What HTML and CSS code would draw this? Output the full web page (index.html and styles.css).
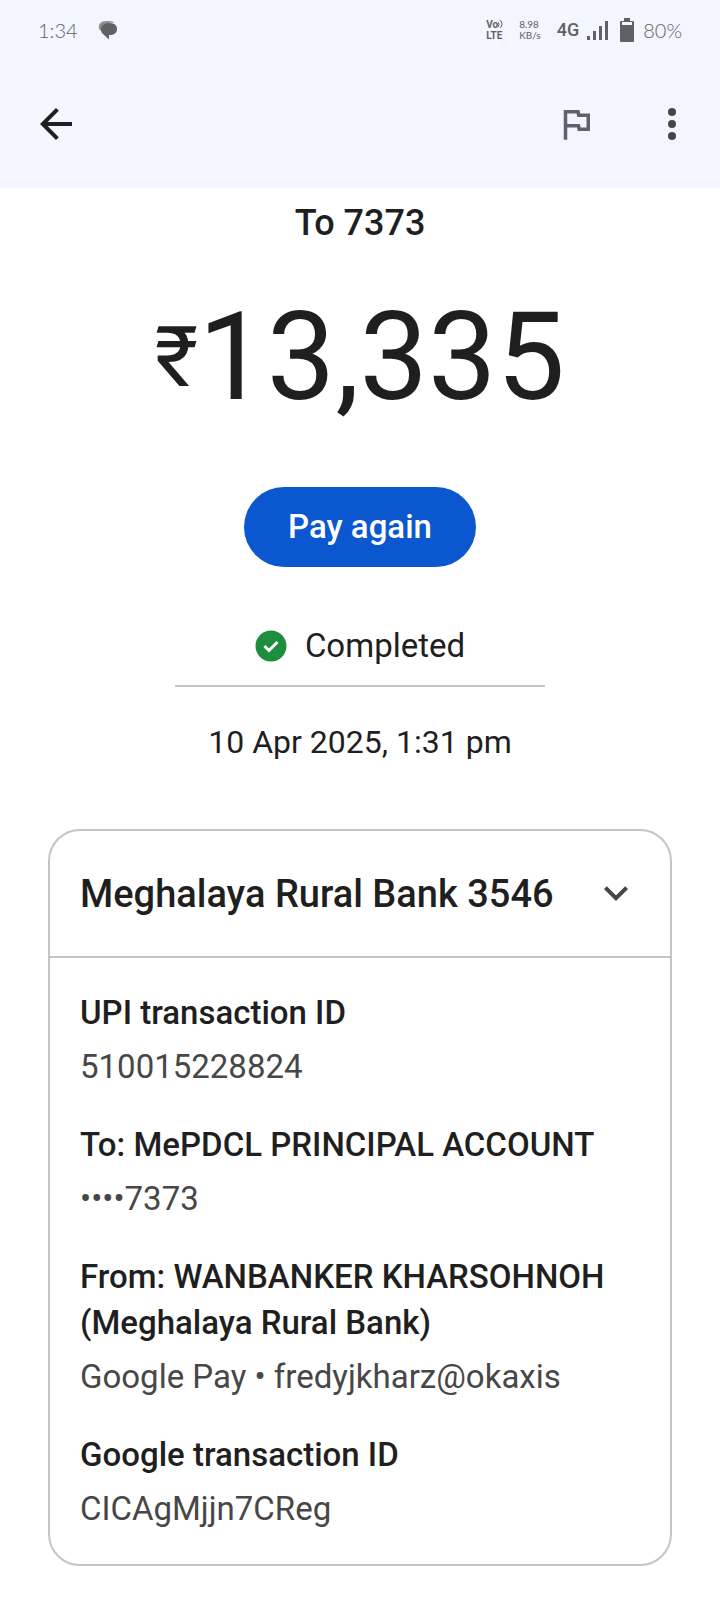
FILE: index.html
```html
<!DOCTYPE html>
<html lang="en">
<head>
  <meta charset="UTF-8">
  <meta name="viewport" content="width=device-width, initial-scale=1">
  <title>Transaction details</title>
  <link rel="stylesheet" href="styles.css">
</head>
<body>

  <header class="top">
    <div class="status-bar">
      <span class="clock">1:34</span>
      <svg class="chat-icon" width="20" height="20" viewBox="0 0 20 20">
        <path d="M1 9C0 4 3 1 8 1c4 0 7 0 8 2C10 2 4 3 3 11z" fill="#8d9095"/>
        <path d="M10.500 3C16 3 19 5 19 9s-3 6-8 6v4.500L5 14C1 10 3 3 10.500 3z" fill="#5f6165"/>
      </svg>
      <div class="status-right">
        <div class="volte">
          <span class="vo">Vo<svg width="5" height="9" viewBox="0 0 5 9" fill="none" stroke="#5f6165"><path d="M0 2q2 2.500 0 5M2 0q4 4 0 8"/></svg></span>
          <span>LTE</span>
        </div>
        <div class="speed"><span>8.98</span><span>KB/s</span></div>
        <span class="network">4G</span>
        <svg class="signal" width="22" height="20" viewBox="0 0 22 20" fill="#5f6165">
          <rect x="0" y="16" width="3" height="4"/>
          <rect x="6" y="11" width="3" height="9"/>
          <rect x="12" y="6" width="3" height="14"/>
          <rect x="18" y="1" width="3" height="19"/>
        </svg>
        <svg class="battery" width="16" height="24" viewBox="0 0 16 24">
          <path d="M5 0h6v3h3q1 0 1 1v19q0 1-1 1H2q-1 0-1-1V4q0-1 1-1h3z" fill="#5f6165"/>
          <rect x="3" y="4" width="10" height="3" fill="#f3f6fe"/>
        </svg>
        <span class="percent">80%</span>
      </div>
    </div>

    <nav class="app-bar">
      <button class="icon-btn" aria-label="Back">
        <svg width="48" height="48" viewBox="0 0 24 24" fill="#1f1f1f">
          <path d="M20 11H7.830l5.590-5.590L12 4l-8 8 8 8 1.410-1.410L7.830 13H20z"/>
        </svg>
      </button>
      <div class="actions">
        <button class="icon-btn" aria-label="Report">
          <svg width="42" height="42" viewBox="0 0 24 24" fill="#5f6368">
            <path d="M12.360 6l.4 2H18v6h-3.360l-.4-2H7V6h5.360M14 4H5v17h2v-7h5.600l.4 2h7V6h-5.600L14 4z"/>
          </svg>
        </button>
        <button class="icon-btn" aria-label="More options">
          <svg width="48" height="48" viewBox="0 0 24 24" fill="#444746">
            <circle cx="12" cy="6" r="2"/>
            <circle cx="12" cy="12" r="2"/>
            <circle cx="12" cy="18" r="2"/>
          </svg>
        </button>
      </div>
    </nav>
  </header>

  <main>
    <section class="summary">
      <h1 class="payee">To 7373</h1>
      <div class="amount"><span class="currency">₹</span><span>13,335</span></div>
      <button class="pay-again">Pay again</button>
      <div class="state">
        <svg width="32" height="32" viewBox="0 0 32 32">
          <circle cx="16" cy="16" r="15.500" fill="#1e8e3e"/>
          <path d="M9.500 16l4.500 4.500 8.500-8.500" fill="none" stroke="#fff" stroke-width="3"/>
        </svg>
        <span>Completed</span>
      </div>
      <div class="date">10 Apr 2025, 1:31 pm</div>
    </section>

    <section class="card">
      <button class="card-header" aria-expanded="true">
        <span>Meghalaya Rural Bank 3546</span>
        <svg width="48" height="48" viewBox="0 0 24 24">
          <path d="M6.700 8.800L12 14.100l5.300-5.300" fill="none" stroke="#444746" stroke-width="2"/>
        </svg>
      </button>
      <dl class="details">
        <div class="row">
          <dt>UPI transaction ID</dt>
          <dd>510015228824</dd>
        </div>
        <div class="row">
          <dt>To: MePDCL PRINCIPAL ACCOUNT</dt>
          <dd>••••7373</dd>
        </div>
        <div class="row">
          <dt>From: WANBANKER KHARSOHNOH (Meghalaya Rural Bank)</dt>
          <dd>Google Pay • fredyjkharz@okaxis</dd>
        </div>
        <div class="row">
          <dt>Google transaction ID</dt>
          <dd>CICAgMjjn7CReg</dd>
        </div>
      </dl>
    </section>
  </main>

</body>
</html>
```
FILE: styles.css
```css
* {
  box-sizing: border-box;
}

body {
  margin: 0;
  background-color: #fff;
  color: #1f1f1f;
  font-family: Roboto, sans-serif;
  font-size: 33px;
  line-height: 46px;
}

button {
  border: none;
  padding: 0;
  background: none;
  color: inherit;
  font: inherit;
  cursor: pointer;
}

svg {
  display: block;
}

.top {
  background-color: #f3f6fe;
}

.status-bar {
  display: flex;
  align-items: center;
  height: 60px;
  padding: 0 38px;
  color: #5f6165;
}

.clock,
.percent {
  font-family: Lato, sans-serif;
  font-weight: 300;
  font-size: 20px;
  line-height: 24px;
}

.chat-icon {
  margin-left: 20px;
}

.status-right {
  display: flex;
  align-items: center;
  margin-left: auto;
}

.volte,
.speed {
  display: flex;
  flex-direction: column;
  font-size: 10px;
  line-height: 11px;
}

.volte {
  font-weight: 700;
}

.vo {
  display: flex;
  align-items: center;
}

.speed {
  margin-left: 16px;
  font-family: Lato, sans-serif;
}

.network {
  margin-left: 16px;
  font-weight: 500;
  font-size: 18px;
  line-height: 24px;
}

.signal {
  margin-left: 8px;
}

.battery {
  margin: 0 8px 0 10px;
}

.app-bar {
  display: flex;
  align-items: center;
  justify-content: space-between;
  height: 128px;
  padding: 0 24px 0 32px;
}

.actions {
  display: flex;
  align-items: center;
  gap: 51px;
}

.summary {
  display: flex;
  flex-direction: column;
  align-items: center;
  padding: 11px 24px 64px;
}

.payee {
  margin: 0;
  font-weight: 500;
  font-size: 36px;
  line-height: 48px;
}

.amount {
  display: flex;
  align-items: center;
  margin-top: 36px;
  font-size: 122px;
  line-height: 150px;
}

.currency {
  font-size: 84px;
}

.pay-again {
  height: 80px;
  margin-top: 54px;
  padding: 0 44px;
  border-radius: 40px;
  background-color: #0b57d0;
  color: #fff;
  font-weight: 500;
}

.state {
  display: flex;
  align-items: center;
  justify-content: center;
  gap: 18px;
  width: 55%;
  margin-top: 56px;
  padding-bottom: 16px;
  border-bottom: 2px solid #c4c4c4;
}

.date {
  margin-top: 32px;
  font-size: 32px;
}

.card {
  margin: 0 48px 32px;
  border: 2px solid #c4c4c4;
  border-radius: 32px;
}

.card-header {
  display: flex;
  align-items: center;
  justify-content: space-between;
  width: 100%;
  min-height: 127px;
  padding: 0 30px;
  border-bottom: 2px solid #c4c4c4;
  font-weight: 500;
  font-size: 38px;
  text-align: left;
}

.details {
  display: flex;
  flex-direction: column;
  gap: 32px;
  margin: 0;
  padding: 32px 30px;
}

.row {
  display: flex;
  flex-direction: column;
  gap: 8px;
}

dt {
  font-weight: 500;
}

dd {
  margin: 0;
  color: #474747;
}
```
